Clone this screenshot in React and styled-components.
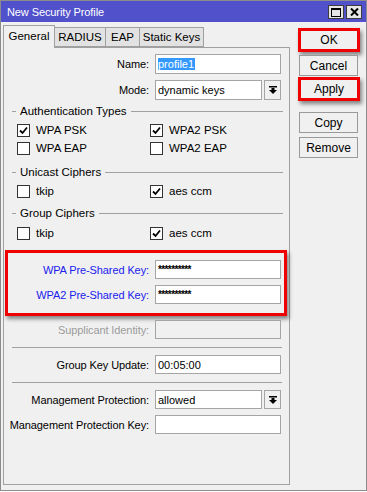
import React from "react";
import styled, { createGlobalStyle } from "styled-components";

const GlobalStyle = createGlobalStyle`
  body {
    margin: 0;
    background: #ffffff;
    font-family: "Liberation Sans", Arial, sans-serif;
    font-size: 11px;
  }
`;

const Window = styled.div`
  width: 367px;
  height: 491px;
  box-sizing: border-box;
  border: 1px solid #8c8c8c;
  background: #f0f0f0;
  display: flex;
  flex-direction: column;
`;

const TitleBar = styled.div`
  height: 21px;
  flex: none;
  background: #5151cc;
  color: #ffffff;
  font-size: 11px;
  letter-spacing: -0.1px;
  display: flex;
  align-items: center;
  justify-content: space-between;
  padding: 0 4px 0 6px;
`;

const TitleButtons = styled.div`
  display: flex;
  gap: 2px;
  padding-top: 1px;
`;

const TitleButton = styled.div`
  width: 16px;
  height: 14px;
  box-sizing: border-box;
  border: 1px solid #3c3c3c;
  background: #e6e6e6;
  display: flex;
  align-items: center;
  justify-content: center;
`;

const Body = styled.div`
  flex: 1;
  display: flex;
  padding: 3px 0 5px 2px;
  min-height: 0;
`;

const LeftCol = styled.div`
  width: 287px;
  display: flex;
  flex-direction: column;
`;

const Tabs = styled.div`
  display: flex;
  align-items: flex-end;
  height: 22px;
  flex: none;
`;

const Tab = styled.div`
  box-sizing: border-box;
  width: ${(p) => p.$w}px;
  height: ${(p) => (p.$active ? "23px" : "20px")};
  margin-bottom: ${(p) => (p.$active ? "-1px" : "0")};
  position: relative;
  z-index: ${(p) => (p.$active ? 1 : 0)};
  padding-top: ${(p) => (p.$active ? "4px" : "3px")};
  text-align: center;
  border: 1px solid #a0a0a0;
  border-bottom: ${(p) => (p.$active ? "none" : "1px solid #a0a0a0")};
  border-left: ${(p) => (p.$first || p.$active ? "1px solid #a0a0a0" : "none")};
  background: ${(p) => (p.$active ? "#f0f0f0" : "#e2e2e2")};
  color: #000;
  font-size: 11.5px;
`;

const Panel = styled.div`
  flex: 1;
  border: 1px solid #a0a0a0;
  display: flex;
  flex-direction: column;
  padding-top: 6px;
`;

const Row = styled.div`
  display: grid;
  grid-template-columns: ${(p) => p.$labelWidth || 145}px 126px;
  column-gap: 6px;
  align-items: center;
  height: ${(p) => p.$h || 19}px;
  margin-top: ${(p) => p.$mt || 0}px;
`;

const Label = styled.div`
  text-align: right;
  white-space: nowrap;
  letter-spacing: -0.1px;
  color: ${(p) => (p.$tone === "blue" ? "#2020ee" : p.$tone === "gray" ? "#9c9c9c" : "#000")};
`;

const Field = styled.div`
  box-sizing: border-box;
  height: 100%;
  border: 1px solid #a5a5a5;
  background: ${(p) => (p.$disabled ? "#f0f0f0" : "#ffffff")};
  display: flex;
  align-items: center;
  padding-left: 2px;
  color: #000;
  overflow: hidden;
  white-space: nowrap;
`;

const Selected = styled.span`
  background: #3399ff;
  color: #ffffff;
  padding-right: 1px;
`;

const Masked = styled.span`
  letter-spacing: -0.6px;
  font-weight: bold;
  font-size: 10px;
  align-self: flex-start;
  margin-top: 3px;
`;

const ComboWrap = styled.div`
  display: flex;
  gap: 2px;
  height: 100%;
`;

const ComboField = styled(Field)`
  flex: 1;
`;

const ComboButton = styled.div`
  width: 17px;
  box-sizing: border-box;
  border: 1px solid #a5a5a5;
  background: #f0f0f0;
  display: flex;
  align-items: center;
  justify-content: center;
`;

const GroupHeader = styled.div`
  display: flex;
  align-items: center;
  height: 14px;
  margin-top: ${(p) => p.$mt}px;
  padding: 0 6px 0 8px;
  gap: 4px;
  color: #000;
  font-size: 11.5px;

  &::before {
    content: "";
    width: 4px;
    height: 1px;
    background: #a0a0a0;
  }
  &::after {
    content: "";
    flex: 1;
    height: 1px;
    background: #a0a0a0;
  }
`;

const CheckGrid = styled.div`
  display: grid;
  grid-template-columns: 133px 1fr;
  padding-left: 13px;
  margin-top: ${(p) => p.$mt}px;
`;

const CheckItem = styled.div`
  display: flex;
  align-items: center;
  gap: 6px;
  height: 18px;
  color: #000;
  font-size: 11.5px;
`;

const Box = styled.div`
  width: 13px;
  height: 13px;
  box-sizing: border-box;
  border: 1px solid #333333;
  background: #ffffff;
  display: flex;
  align-items: center;
  justify-content: center;
`;

const Highlight = styled.div`
  margin: ${(p) => p.$margin};
  border: 3px solid #f00000;
  box-shadow: 2px 3px 4px rgba(0, 0, 0, 0.45);
`;

const KeyBox = styled(Highlight)`
  width: 282px;
  box-sizing: border-box;
  padding: 7px 0 9px;
  display: flex;
  flex-direction: column;
  gap: 6px;
`;

const Separator = styled.div`
  height: 1px;
  background: #a0a0a0;
  margin: ${(p) => p.$mt}px 7px 0 8px;
`;

const RightCol = styled.div`
  margin-left: 8px;
  padding-top: 3px;
  display: flex;
  flex-direction: column;
`;

const Button = styled.div`
  width: ${(p) => (p.$hl ? 56 : 59)}px;
  height: ${(p) => (p.$hl ? 18 : 21)}px;
  box-sizing: border-box;
  margin: ${(p) => p.$margin || "0"};
  border: ${(p) => (p.$hl ? "none" : "1px solid #9a9a9a")};
  background: #f0f0f0;
  display: flex;
  align-items: center;
  justify-content: center;
  color: #000;
  font-size: 12px;
`;

function Check({ on }) {
  return (
    <Box>
      {on && (
        <svg width="9" height="9" viewBox="0 0 9 9">
          <path d="M1 4.5 L3.5 7 L8 1.5" fill="none" stroke="#000" strokeWidth="1.8" />
        </svg>
      )}
    </Box>
  );
}

function DropArrow() {
  return (
    <svg width="8" height="8" viewBox="0 0 8 8">
      <rect x="0" y="0" width="8" height="1.5" fill="#000" />
      <rect x="2.5" y="2" width="3" height="2" fill="#000" />
      <polygon points="0,4 8,4 4,8" fill="#000" />
    </svg>
  );
}

function Combo({ value }) {
  return (
    <ComboWrap>
      <ComboField>{value}</ComboField>
      <ComboButton>
        <DropArrow />
      </ComboButton>
    </ComboWrap>
  );
}

function CheckPair({ left, right, mt }) {
  return (
    <CheckGrid $mt={mt}>
      <CheckItem>
        <Check on={left[1]} />
        {left[0]}
      </CheckItem>
      <CheckItem>
        <Check on={right[1]} />
        {right[0]}
      </CheckItem>
    </CheckGrid>
  );
}

export default function App() {
  return (
    <>
      <GlobalStyle />
      <Window>
        <TitleBar>
          <span>New Security Profile</span>
          <TitleButtons>
            <TitleButton>
              <svg width="10" height="9" viewBox="0 0 10 9">
                <rect x="0.5" y="0.5" width="9" height="8" fill="none" stroke="#000" />
                <rect x="0" y="0" width="10" height="2" fill="#000" />
              </svg>
            </TitleButton>
            <TitleButton>
              <svg width="9" height="8" viewBox="0 0 9 8">
                <path d="M1 0.5 L8 7.5 M8 0.5 L1 7.5" stroke="#000" strokeWidth="2" />
              </svg>
            </TitleButton>
          </TitleButtons>
        </TitleBar>
        <Body>
          <LeftCol>
            <Tabs>
              <Tab $active $first $w={52}>General</Tab>
              <Tab $w={51}>RADIUS</Tab>
              <Tab $w={34}>EAP</Tab>
              <Tab $w={64}>Static Keys</Tab>
            </Tabs>
            <Panel>
              <Row $h={20}>
                <Label>Name:</Label>
                <Field>
                  <Selected>profile1</Selected>
                </Field>
              </Row>
              <Row $h={20} $mt={6}>
                <Label>Mode:</Label>
                <Combo value="dynamic keys" />
              </Row>

              <GroupHeader $mt={4}>Authentication Types</GroupHeader>
              <CheckPair mt={3} left={["WPA PSK", true]} right={["WPA2 PSK", true]} />
              <CheckPair mt={0} left={["WPA EAP", false]} right={["WPA2 EAP", false]} />

              <GroupHeader $mt={8}>Unicast Ciphers</GroupHeader>
              <CheckPair mt={3} left={["tkip", false]} right={["aes ccm", true]} />

              <GroupHeader $mt={6}>Group Ciphers</GroupHeader>
              <CheckPair mt={4} left={["tkip", false]} right={["aes ccm", true]} />

              <KeyBox $margin="8px 0 0 1px">
                <Row $labelWidth={141}>
                  <Label $tone="blue">WPA Pre-Shared Key:</Label>
                  <Field>
                    <Masked>**********</Masked>
                  </Field>
                </Row>
                <Row $labelWidth={141}>
                  <Label $tone="blue">WPA2 Pre-Shared Key:</Label>
                  <Field>
                    <Masked>**********</Masked>
                  </Field>
                </Row>
              </KeyBox>

              <Row $mt={4}>
                <Label $tone="gray">Supplicant Identity:</Label>
                <Field $disabled />
              </Row>
              <Separator $mt={8} />
              <Row $mt={7}>
                <Label>Group Key Update:</Label>
                <Field>00:05:00</Field>
              </Row>
              <Separator $mt={8} />
              <Row $mt={7}>
                <Label>Management Protection:</Label>
                <Combo value="allowed" />
              </Row>
              <Row $mt={6}>
                <Label>Management Protection Key:</Label>
                <Field />
              </Row>
            </Panel>
          </LeftCol>
          <RightCol>
            <Highlight $margin="0">
              <Button $hl>OK</Button>
            </Highlight>
            <Button $margin="3px 0 0 1px">Cancel</Button>
            <Highlight $margin="1px 0 0 0">
              <Button $hl>Apply</Button>
            </Highlight>
            <Button $margin="11px 0 0 1px">Copy</Button>
            <Button $margin="4px 0 0 1px">Remove</Button>
          </RightCol>
        </Body>
      </Window>
    </>
  );
}
